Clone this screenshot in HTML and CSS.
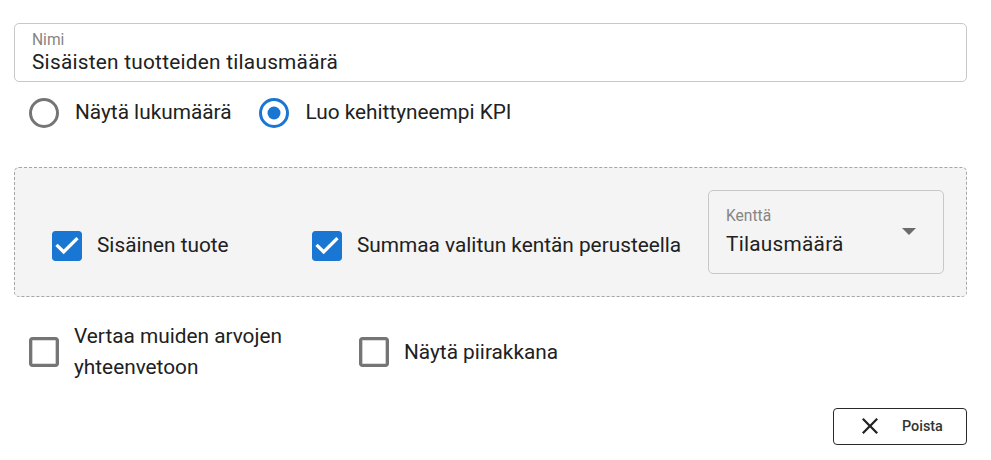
FILE: index.html
```html
<!DOCTYPE html>
<html lang="fi">
<head>
<meta charset="utf-8">
<title>KPI</title>
<link rel="stylesheet" href="styles.css">
</head>
<body>
<div class="page">
  <div class="field">
    <div class="field-label">Nimi</div>
    <div class="field-value">Sisäisten tuotteiden tilausmäärä</div>
  </div>

  <div class="radio-row">
    <label class="option">
      <svg class="icon" viewBox="0 0 30 30"><circle cx="15" cy="15" r="13.5" fill="none" stroke="#757575" stroke-width="3"/></svg>
      <span>Näytä lukumäärä</span>
    </label>
    <label class="option">
      <svg class="icon" viewBox="0 0 30 30"><circle cx="15" cy="15" r="13.5" fill="none" stroke="#1976d2" stroke-width="3"/><circle cx="15" cy="15" r="6.5" fill="#1976d2"/></svg>
      <span>Luo kehittyneempi KPI</span>
    </label>
  </div>

  <div class="panel">
    <label class="option check-opt first">
      <svg class="icon" viewBox="3 3 18 18"><path fill="#1976d2" d="M19 3H5c-1.11 0-2 .9-2 2v14c0 1.1.89 2 2 2h14c1.11 0 2-.9 2-2V5c0-1.1-.89-2-2-2z"/><path fill="#fff" d="M10 17l-5-5 1.41-1.41L10 14.17l7.59-7.59L19 8l-9 9z"/></svg>
      <span>Sisäinen tuote</span>
    </label>
    <label class="option check-opt">
      <svg class="icon" viewBox="3 3 18 18"><path fill="#1976d2" d="M19 3H5c-1.11 0-2 .9-2 2v14c0 1.1.89 2 2 2h14c1.11 0 2-.9 2-2V5c0-1.1-.89-2-2-2z"/><path fill="#fff" d="M10 17l-5-5 1.41-1.41L10 14.17l7.59-7.59L19 8l-9 9z"/></svg>
      <span>Summaa valitun kentän perusteella</span>
    </label>
    <div class="select">
      <div class="select-text">
        <div class="field-label">Kenttä</div>
        <div class="field-value">Tilausmäärä</div>
      </div>
      <svg class="arrow" viewBox="7 10 10 5"><path fill="#6b6b6b" d="M7 10l5 5 5-5z"/></svg>
    </div>
  </div>

  <div class="bottom-row">
    <label class="option bottom-first">
      <svg class="icon" viewBox="3 3 18 18"><path fill="#757575" d="M19 5v14H5V5h14m0-2H5c-1.1 0-2 .9-2 2v14c0 1.1.9 2 2 2h14c1.1 0 2-.9 2-2V5c0-1.1-.9-2-2-2z"/></svg>
      <span>Vertaa muiden arvojen yhteenvetoon</span>
    </label>
    <label class="option">
      <svg class="icon" viewBox="3 3 18 18"><path fill="#757575" d="M19 5v14H5V5h14m0-2H5c-1.1 0-2 .9-2 2v14c0 1.1.9 2 2 2h14c1.1 0 2-.9 2-2V5c0-1.1-.9-2-2-2z"/></svg>
      <span>Näytä piirakkana</span>
    </label>
  </div>

  <div class="actions">
    <button class="btn" type="button">
      <svg class="close" viewBox="5 5 14 14"><path fill="#222" d="M19 6.41L17.59 5 12 10.59 6.41 5 5 6.41 10.59 12 5 17.59 6.41 19 12 13.41 17.59 19 19 17.59 13.41 12z"/></svg>
      <span>Poista</span>
    </button>
  </div>
</div>
</body>
</html>
```

FILE: styles.css
```css
* {
  box-sizing: border-box;
}

body {
  margin: 0;
  background: #ffffff;
  color: #212121;
  font-family: Roboto, "Noto Sans", "Liberation Sans", sans-serif;
}

.page {
  padding: 23px 24px 0 14px;
}

.field {
  border: 1px solid #c8c8c8;
  border-radius: 5px;
  padding: 9px 17px 6.4px;
}

.field-label {
  font-size: 15.6px;
  line-height: 15.6px;
  color: #858585;
}

.field-value {
  margin-top: 1px;
  font-size: 20.8px;
  line-height: 25px;
  letter-spacing: 0.25px;
  color: #212121;
}

.option {
  display: flex;
  align-items: center;
  gap: 15px;
  font-size: 20.8px;
  line-height: 31.2px;
  color: #212121;
}

.icon {
  display: block;
  flex: none;
  width: 30px;
  height: 30px;
}

.radio-row {
  display: flex;
  align-items: center;
  gap: 28px;
  margin-top: 15.5px;
  padding-left: 15px;
}

.radio-row .option {
  gap: 16px;
}

.panel {
  display: flex;
  align-items: flex-end;
  height: 130px;
  margin-top: 38.3px;
  padding: 22px;
  border: 1px dashed #a6a6a6;
  border-radius: 5px;
  background: #f4f4f4;
}

.check-opt {
  margin-bottom: 12.4px;
}

.check-opt.first {
  width: 275px;
  padding-left: 15px;
}

.select {
  display: flex;
  align-items: center;
  width: 236px;
  height: 84px;
  margin-left: auto;
  padding: 17.6px 27px 16px 17px;
  border: 1px solid #c8c8c8;
  border-radius: 5px;
}

.select-text {
  flex: 1;
}

.select-text .field-value {
  margin-top: 6.9px;
}

.arrow {
  display: block;
  width: 14px;
  height: 7px;
  margin-top: -2px;
}

.bottom-row {
  display: flex;
  align-items: center;
  margin-top: 24.3px;
  padding-left: 15px;
}

.bottom-first {
  width: 330px;
  flex: none;
}

.actions {
  display: flex;
  justify-content: flex-end;
  margin-top: 24.3px;
}

.btn {
  display: flex;
  align-items: center;
  gap: 24px;
  width: 134px;
  height: 37px;
  padding: 0 0 0 28px;
  border: 1px solid #2a2a2a;
  border-radius: 4px;
  background: #ffffff;
  color: #333333;
  font-family: Roboto, "Noto Sans", "Liberation Sans", sans-serif;
  font-size: 14.4px;
  font-weight: 500;
  cursor: pointer;
}

.close {
  display: block;
  width: 16px;
  height: 16px;
}
```
